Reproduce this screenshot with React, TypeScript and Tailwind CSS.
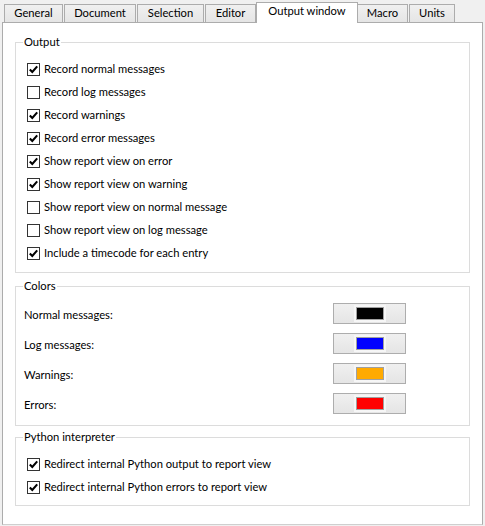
import React from 'react';

const tabs = [
  { label: 'General', w: 59 },
  { label: 'Document', w: 72 },
  { label: 'Selection', w: 67 },
  { label: 'Editor', w: 51 },
  { label: 'Output window', w: 101, active: true },
  { label: 'Macro', w: 51 },
  { label: 'Units', w: 46 },
];

const outputOptions = [
  { label: 'Record normal messages', checked: true },
  { label: 'Record log messages', checked: false },
  { label: 'Record warnings', checked: true },
  { label: 'Record error messages', checked: true },
  { label: 'Show report view on error', checked: true },
  { label: 'Show report view on warning', checked: true },
  { label: 'Show report view on normal message', checked: false },
  { label: 'Show report view on log message', checked: false },
  { label: 'Include a timecode for each entry', checked: true },
];

const colors = [
  { label: 'Normal messages:', color: '#000000' },
  { label: 'Log messages:', color: '#0000ff' },
  { label: 'Warnings:', color: '#ffaa00' },
  { label: 'Errors:', color: '#ff0000' },
];

const Check: React.FC<{ label: string; checked: boolean }> = ({ label, checked }) => (
  <div className="flex items-center h-[23px]">
    <div className="w-[13px] h-[13px] border border-[#333333] bg-white flex items-center justify-center">
      {checked && (
        <svg width="11" height="11" viewBox="0 0 11 11">
          <path d="M1.8 5.4 L4.3 7.9 L9.2 2.4" fill="none" stroke="#000" strokeWidth="2.1" />
        </svg>
      )}
    </div>
    <span className="ml-[4px]">{label}</span>
  </div>
);

const Group: React.FC<{ title: string; className: string; children: React.ReactNode }> = ({
  title,
  className,
  children,
}) => (
  <div className={`relative border border-[#dcdcdc] ml-[12px] w-[455px] ${className}`}>
    <span className="absolute left-[7px] top-[-9px] bg-white px-[1px] leading-[16px]">{title}</span>
    {children}
  </div>
);

export default function App() {
  return (
    <div
      className="w-[485px] h-[526px] bg-[#f0f0f0] text-[11.2px] text-black overflow-hidden"
      style={{ fontFamily: 'Lato, "Noto Sans", sans-serif' }}
    >
      <div className="flex items-end h-[22px] pl-[4px]">
        {tabs.map((t, i) =>
          t.active ? (
            <div
              key={i}
              className="relative z-10 h-[21px] mb-[-1px] -ml-[1px] -mr-[1px] bg-white border border-b-0 border-[#acacac] flex items-center justify-center pb-[3px]"
              style={{ width: t.w + 1 }}
            >
              {t.label}
            </div>
          ) : (
            <div
              key={i}
              className="h-[18px] bg-gradient-to-b from-[#f0f0f0] to-[#e5e5e5] border border-b-0 border-[#acacac] flex items-center justify-center mr-[1px]"
              style={{ width: t.w }}
            >
              {t.label}
            </div>
          )
        )}
      </div>
      <div className="ml-[2px] w-[481px] h-[503px] bg-white border border-[#acacac] border-b-[#cfcfcf] pt-[19px]">
        <Group title="Output" className="pt-[15px] pb-[7px] pl-[11px]">
          {outputOptions.map((o, i) => (
            <Check key={i} label={o.label} checked={o.checked} />
          ))}
        </Group>
        <Group title="Colors" className="mt-[13px] pt-[13px] pb-[5px] pl-[8px]">
          {colors.map((c, i) => (
            <div key={i} className="flex items-center h-[30px]">
              <span className="w-[309px]">{c.label}</span>
              <div className="w-[73px] h-[21px] border border-[#adadad] bg-gradient-to-b from-[#f0f0f0] to-[#e5e5e5] flex items-center justify-center mt-[-3px]">
                <div className="p-[2px] bg-[#f6f6f6]">
                  <div className="w-[28px] h-[13px] border border-[#a0a0a0]" style={{ backgroundColor: c.color }} />
                </div>
              </div>
            </div>
          ))}
        </Group>
        <Group title="Python interpreter" className="mt-[11px] pt-[15px] pb-[6px] pl-[11px]">
          <Check label="Redirect internal Python output to report view" checked />
          <Check label="Redirect internal Python errors to report view" checked />
        </Group>
      </div>
    </div>
  );
}
